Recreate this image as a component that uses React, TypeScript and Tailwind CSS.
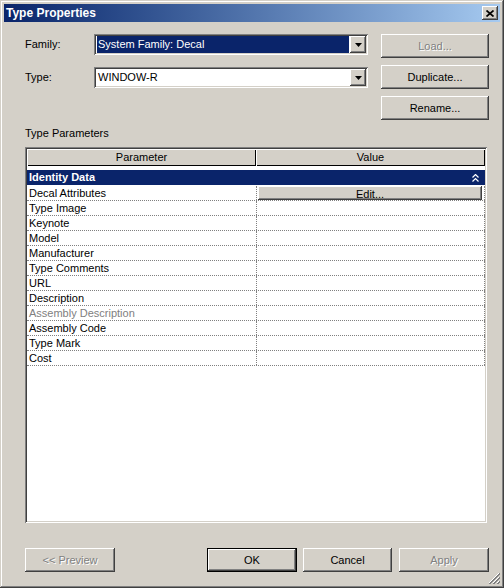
import type { ReactNode } from 'react';

const raised =
  'bg-[#d4d0c8] shadow-[inset_-1px_-1px_#404040,inset_1px_1px_#ffffff,inset_-2px_-2px_#808080,inset_2px_2px_#d4d0c8]';
const sunken =
  'shadow-[inset_1px_1px_#808080,inset_-1px_-1px_#ffffff,inset_2px_2px_#404040,inset_-2px_-2px_#d4d0c8]';
const disabledText = 'text-[#808080] [text-shadow:1px_1px_0_#ffffff]';

const rows = [
  'Decal Attributes',
  'Type Image',
  'Keynote',
  'Model',
  'Manufacturer',
  'Type Comments',
  'URL',
  'Description',
  'Assembly Description',
  'Assembly Code',
  'Type Mark',
  'Cost',
];

function Button({
  children,
  disabled,
  isDefault,
  className = '',
}: {
  children: ReactNode;
  disabled?: boolean;
  isDefault?: boolean;
  className?: string;
}) {
  if (isDefault) {
    return (
      <div className={`h-[24px] border border-black ${className}`}>
        <div className={`flex h-full items-center justify-center ${raised}`}>{children}</div>
      </div>
    );
  }
  return (
    <div className={`flex h-[24px] items-center justify-center ${raised} ${disabled ? disabledText : ''} ${className}`}>
      {children}
    </div>
  );
}

function ArrowButton() {
  return (
    <div className={`flex h-full w-[16px] items-center justify-center ${raised}`}>
      <svg width="7" height="4" viewBox="0 0 7 4">
        <path d="M0 0h7L3.5 4z" fill="#000" />
      </svg>
    </div>
  );
}

function Combo({ value, selected }: { value: string; selected?: boolean }) {
  return (
    <div className={`flex h-[21px] w-[274px] bg-white p-[2px] ${sunken}`}>
      <div className="flex flex-1 items-center pl-[1px] pr-[1px]">
        <div
          className={`flex h-full flex-1 items-center pl-[1px] ${selected ? 'bg-[#0a246a] text-white' : 'text-black'}`}
        >
          {value}
        </div>
      </div>
      <ArrowButton />
    </div>
  );
}

export default function App() {
  return (
    <div className="relative flex h-[588px] w-[504px] flex-col bg-[#d4d0c8] p-[4px] font-['Liberation_Sans',Arial,sans-serif] text-[11px] text-black shadow-[inset_-1px_-1px_#404040,inset_1px_1px_#d4d0c8,inset_-2px_-2px_#808080,inset_2px_2px_#ffffff]">
      {/* title bar */}
      <div className="flex h-[18px] items-center justify-between bg-gradient-to-r from-[#0a246a] to-[#a6caf0] pl-[2px] pr-[2px]">
        <span className="text-[12px] font-bold text-white">Type Properties</span>
        <div className={`flex h-[14px] w-[16px] items-center justify-center ${raised}`}>
          <svg width="8" height="7" viewBox="0 0 8 7">
            <path d="M0.5 0.5l7 6M7.5 0.5l-7 6" stroke="#000" strokeWidth="1.7" />
          </svg>
        </div>
      </div>

      {/* body */}
      <div className="flex flex-1 flex-col pl-[21px] pr-[11px] pb-[12px]">
        <div className="mt-[12px] flex items-start">
          <span className="w-[69px] leading-[21px]">Family:</span>
          <Combo value="System Family: Decal" selected />
          <Button disabled className="ml-[13px] w-[108px]">
            Load...
          </Button>
        </div>
        <div className="mt-[7px] flex items-start">
          <div className="mt-[2px] flex">
            <span className="w-[69px] leading-[21px]">Type:</span>
            <Combo value="WINDOW-R" />
          </div>
          <Button className="ml-[13px] w-[108px]">Duplicate...</Button>
        </div>
        <div className="mt-[7px] flex justify-end">
          <Button className="w-[108px]">Rename...</Button>
        </div>

        <div className="mt-[7px] h-[13px] leading-[13px]">Type Parameters</div>

        {/* parameter grid */}
        <div className={`mt-[7px] flex w-[462px] flex-1 flex-col bg-white p-[2px] ${sunken}`}>
          <div className="flex h-[17px]">
            <div className="flex w-[229px] items-center justify-center bg-[#d4d0c8] shadow-[inset_1px_1px_#ffffff,inset_-1px_-1px_#000000]">
              Parameter
            </div>
            <div className="flex flex-1 items-center justify-center bg-[#d4d0c8] shadow-[inset_1px_1px_#ffffff,inset_-1px_-1px_#000000]">
              Value
            </div>
          </div>
          <div className="mt-[4px] flex h-[15px] items-center justify-between bg-[#0a246a] pl-[2px] pr-[6px] font-bold text-white">
            <span>Identity Data</span>
            <svg width="7" height="8" viewBox="0 0 7 8">
              <path d="M0.5 3.5l3-3 3 3M0.5 7.5l3-3 3 3" stroke="#fff" strokeWidth="1.2" fill="none" />
            </svg>
          </div>
          <div className="h-[1px]" />
          {rows.map((name) => (
            <div key={name} className="flex h-[15px] border-b border-dotted border-[#808080]">
              <div
                className={`flex w-[229px] items-center overflow-hidden whitespace-nowrap pl-[2px] leading-[14px] ${
                  name === 'Assembly Description' ? 'text-[#808080]' : ''
                }`}
              >
                {name}
              </div>
              <div className="flex flex-1 border-l border-r border-dotted border-[#808080]">
                {name === 'Decal Attributes' && (
                  <div className={`ml-[1px] mr-[2px] flex h-[14px] flex-1 justify-center overflow-hidden leading-[17px] ${raised}`}>
                    Edit...
                  </div>
                )}
              </div>
            </div>
          ))}
        </div>

        {/* bottom buttons */}
        <div className="mt-[25px] flex items-center">
          <Button disabled className="w-[90px]">
            &lt;&lt; Preview
          </Button>
          <div className="flex-1" />
          <Button isDefault className="w-[90px]">
            OK
          </Button>
          <Button className="ml-[6px] w-[89px]">Cancel</Button>
          <Button disabled className="ml-[7px] w-[90px]">
            Apply
          </Button>
        </div>
      </div>

      {/* size grip */}
      <svg className="absolute bottom-[4px] right-[4px]" width="12" height="12" viewBox="0 0 12 12">
        <path d="M11 1L1 11M11 5L5 11M11 9L9 11" stroke="#ffffff" strokeWidth="1" />
        <path d="M12 1L1 12M12 2L2 12M12 5L5 12M12 6L6 12M12 9L9 12M12 10L10 12" stroke="#808080" strokeWidth="1" />
      </svg>
    </div>
  );
}
